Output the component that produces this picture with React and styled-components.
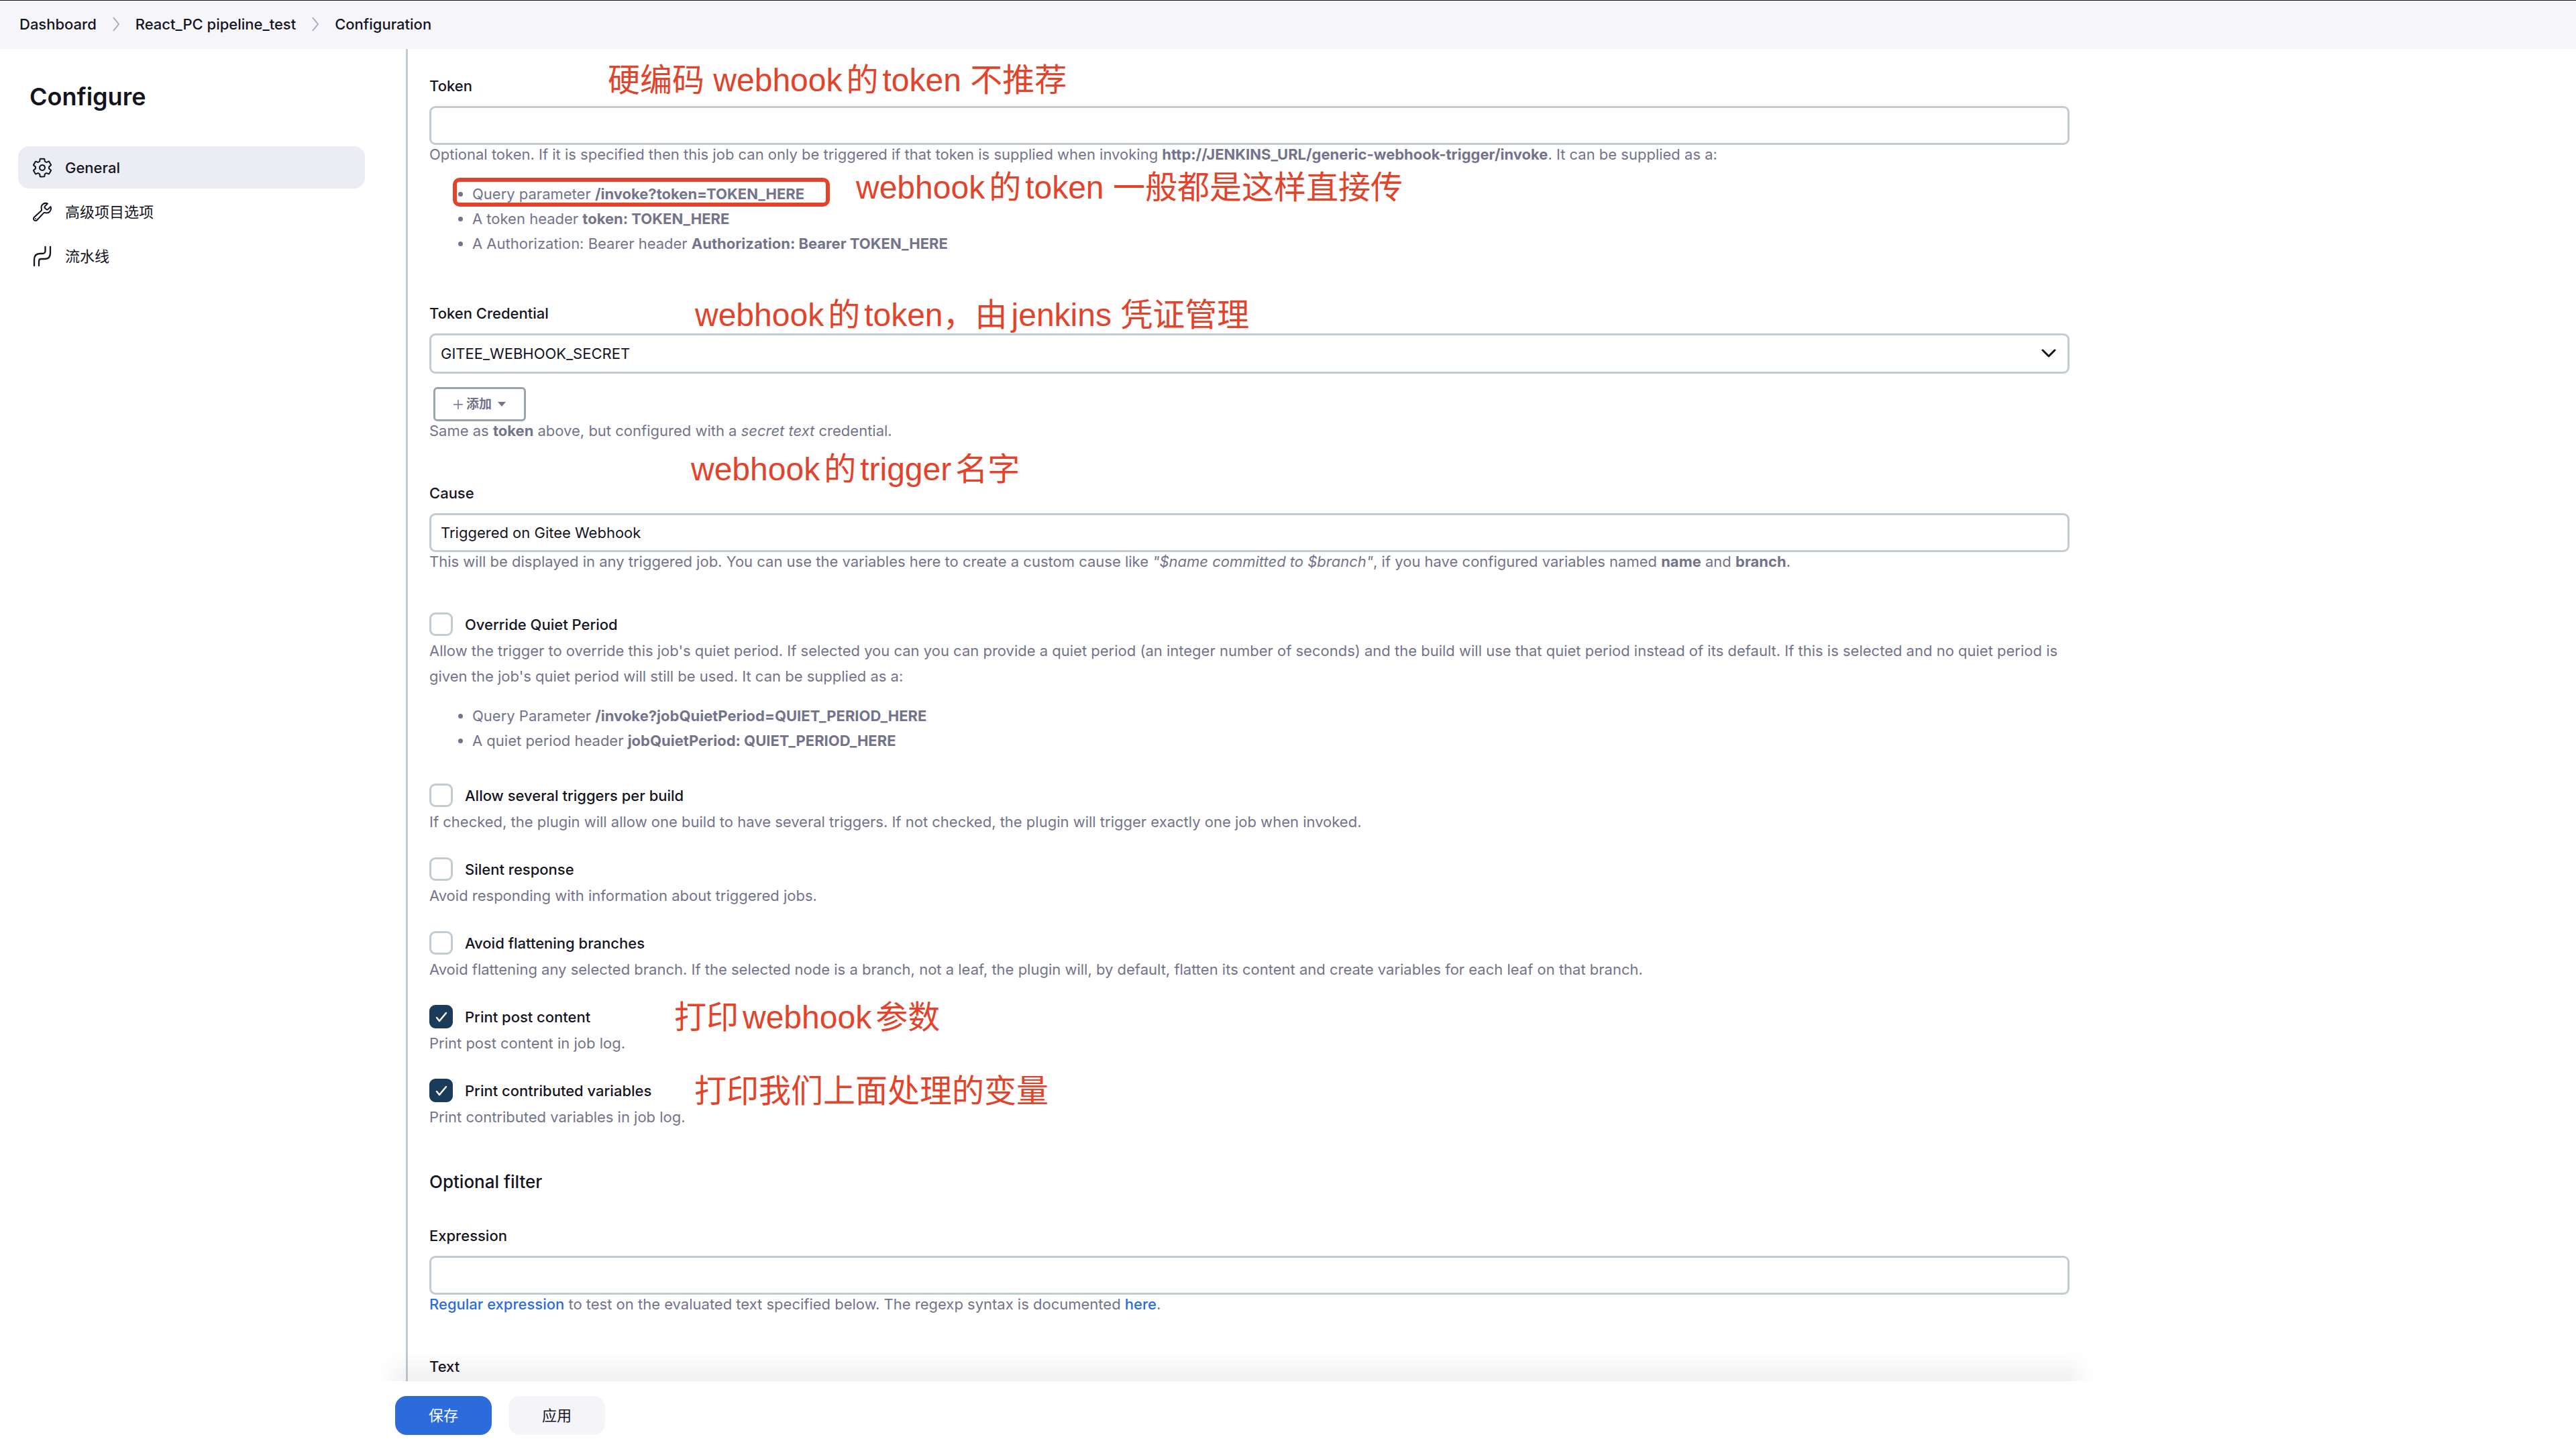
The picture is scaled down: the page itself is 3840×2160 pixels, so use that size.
import React from "react";
import styled, { createGlobalStyle } from "styled-components";
import { IoSettingsOutline, IoBuildOutline } from "react-icons/io5";

const ink = "#14141f";
const muted = "#73738c";
const line = "#c3ccd1";
const blue = "#2c6bdc";
const red = "#e2432a";

const GlobalStyle = createGlobalStyle`
  *, *::before, *::after { box-sizing: border-box; }
  body {
    margin: 0;
    background: #fff;
    color: ${ink};
    font: 400 22px/28px Inter, "Noto Sans CJK SC", sans-serif;
  }
  input, select, button { font: inherit; color: inherit; }
  a { text-decoration: none; color: inherit; }
  h1, h2, p, ul, ol { margin: 0; padding: 0; }
`;

const Page = styled.div`
  height: 100vh;
  display: flex;
  flex-direction: column;
  overflow: hidden;
`;

const Header = styled.header`
  height: 73px;
  flex: none;
  padding: 0 29px 2px;
  border-top: 1px solid #14141f;
  background: #f6f5fa;
`;

const Crumbs = styled.ol`
  height: 100%;
  display: flex;
  align-items: center;
  gap: 24px;
  list-style: none;
  font-weight: 500;
`;

const Crumb = styled.li`
  display: flex;
  align-items: center;
  gap: 24px;
`;

const Body = styled.div`
  flex: 1;
  min-height: 0;
  display: flex;
`;

const Sidebar = styled.nav`
  width: 556px;
  flex: none;
  padding: 49px 12px 0 27px;
`;

const PageTitle = styled.h1`
  padding-left: 17px;
  margin-bottom: 52px;
  font-size: 36px;
  line-height: 44px;
  font-weight: 600;
`;

const NavList = styled.ul`
  display: flex;
  flex-direction: column;
  gap: 3px;
  list-style: none;
`;

const NavLink = styled.a`
  height: 63px;
  display: flex;
  align-items: center;
  gap: 18px;
  padding: 0 20px;
  border-radius: 16px;
  font-weight: 500;
  background: ${(p) => (p.$active ? "#ececf5" : "transparent")};
  svg { width: 32px; height: 32px; flex: none; }
  &:lang(zh) { font-weight: 400; }
`;

const Main = styled.main`
  flex: 1;
  min-width: 0;
  max-width: 2590px;
  display: flex;
  flex-direction: column;
`;

const Viewport = styled.div`
  flex: 1;
  min-height: 0;
  position: relative;
  overflow: hidden;
  padding: 0 61px 0 49px;
  &::after {
    content: "";
    position: absolute;
    left: 29px;
    right: 45px;
    bottom: -60px;
    height: 86px;
    background: rgba(20, 20, 50, 0.055);
    filter: blur(12px);
    pointer-events: none;
  }
`;

const Form = styled.form`
  min-height: 100%;
  padding: 41px 0 0 32px;
  border-left: 3px solid ${line};
`;

const Field = styled.div`
  position: relative;
  margin-bottom: ${(p) => p.$gap || 60}px;
`;

const Label = styled.label`
  display: block;
  width: max-content;
  margin-bottom: 16px;
  font-weight: 500;
`;

const TextInput = styled.input`
  display: block;
  width: 100%;
  height: 58px;
  padding: 0 14px;
  border: 3px solid ${line};
  border-radius: 9px;
  background: #fff;
`;

const SelectWrap = styled.div`
  display: grid;
  align-items: center;
  margin-bottom: 20px;
  > * { grid-area: 1 / 1; }
  svg { justify-self: end; margin-right: 20px; pointer-events: none; }
`;

const Select = styled.select`
  appearance: none;
  width: 100%;
  height: 60px;
  padding: 0 14px;
  border: 3px solid ${line};
  border-radius: 9px;
  background: #fff;
`;

const AddButton = styled.button`
  display: flex;
  align-items: center;
  justify-content: center;
  gap: 5px;
  width: 138px;
  height: 51px;
  margin-left: 6px;
  border: 3px solid #9ba3ab;
  border-radius: 6px;
  background: #fff;
  color: ${muted};
  font-size: 19px;
  font-weight: 700;
`;

const Help = styled.p`
  margin-top: -5px;
  line-height: 38px;
  color: ${muted};
  b { font-weight: 700; }
  a { color: ${blue}; font-weight: 500; }
`;

const Bullets = styled.ul`
  margin-top: 22px;
  padding: 0 0 11px 64px;
  line-height: 37px;
  color: ${muted};
  b { font-weight: 700; }
`;

const CheckRow = styled.label`
  display: flex;
  align-items: center;
  gap: 18px;
  width: max-content;
  margin-bottom: 8px;
  font-weight: 500;
`;

const Tick = styled.span`
  display: grid;
  place-items: center;
  > * { grid-area: 1 / 1; }
  svg { pointer-events: none; }
`;

const Checkbox = styled.input`
  appearance: none;
  width: 35px;
  height: 35px;
  margin: 0;
  border: 3px solid ${line};
  border-radius: 9px;
  background: #fff;
  &:checked { border-color: #1b3b5a; background: #1b3b5a; }
`;

const SectionTitle = styled.h2`
  padding-top: 28px;
  margin-bottom: 50px;
  font-size: 26px;
  line-height: 32px;
  font-weight: 500;
`;

const Note = styled.span`
  position: absolute;
  top: ${(p) => p.$top}px;
  left: ${(p) => p.$left}px;
  font-family: "Liberation Sans", "Noto Sans CJK SC", sans-serif;
  font-size: 48px;
  line-height: 62px;
  text-autospace: normal;
  white-space: nowrap;
  color: ${red};
`;

const Highlight = styled.span`
  position: absolute;
  top: 151px;
  left: 35px;
  width: 562px;
  height: 43px;
  border: 6px solid ${red};
  border-radius: 10px;
`;

const Footer = styled.footer`
  flex: none;
  height: 101px;
  display: flex;
  align-items: flex-start;
  gap: 25px;
  padding: 22px 33px;
`;

const Action = styled.button`
  width: 144px;
  height: 58px;
  border: 0;
  border-radius: 17px;
  color: ${(p) => (p.$primary ? "#fff" : ink)};
  background: ${(p) => (p.$primary ? blue : "#f5f4f9")};
`;

const CrumbArrow = () => (
  <svg width="10" height="22" viewBox="0 0 10 22" fill="none" stroke="#a9a9b8" strokeWidth="2" aria-hidden="true">
    <path d="M1 1l8 10-8 10" />
  </svg>
);

const PipelineIcon = () => (
  <svg viewBox="0 0 32 32" fill="none" stroke="currentColor" strokeWidth="2.3" strokeLinecap="round" aria-hidden="true">
    <path d="M20.500 2V8Q20.500 12 16 12H13Q4 12 4 21V30" />
    <path d="M28 2V11Q28 20 20 20H14Q11 20 11 24V30" />
  </svg>
);

const Chevron = () => (
  <svg width="22" height="14" viewBox="0 0 22 14" fill="none" stroke={ink} strokeWidth="3" strokeLinecap="round" strokeLinejoin="round" aria-hidden="true">
    <path d="M2 2l9 9 9-9" />
  </svg>
);

function CheckField({ id, label, checked, note, children }) {
  return (
    <Field $gap={34}>
      <CheckRow htmlFor={id}>
        <Tick>
          <Checkbox type="checkbox" id={id} defaultChecked={checked} />
          {checked && (
            <svg width="18" height="16" viewBox="0 0 18 16" fill="none" stroke="#fff" strokeWidth="2.5" strokeLinecap="round" strokeLinejoin="round" aria-hidden="true">
              <path d="M2 9l4 5L16 2" />
            </svg>
          )}
        </Tick>
        {label}
      </CheckRow>
      {note}
      {children}
    </Field>
  );
}

export default function App() {
  return (
    <Page>
      <GlobalStyle />
      <Header>
        <Crumbs>
          <Crumb><a href="#dashboard">Dashboard</a><CrumbArrow /></Crumb>
          <Crumb><a href="#job">React_PC pipeline_test</a><CrumbArrow /></Crumb>
          <Crumb><a href="#configuration">Configuration</a></Crumb>
        </Crumbs>
      </Header>
      <Body>
        <Sidebar>
          <PageTitle>Configure</PageTitle>
          <NavList>
            <li><NavLink href="#general" $active><IoSettingsOutline />General</NavLink></li>
            <li><NavLink href="#advanced" lang="zh"><IoBuildOutline />高级项目选项</NavLink></li>
            <li><NavLink href="#pipeline" lang="zh"><PipelineIcon />流水线</NavLink></li>
          </NavList>
        </Sidebar>
        <Main>
          <Viewport>
            <Form id="config" onSubmit={(e) => e.preventDefault()}>
              <Field>
                <Label htmlFor="token">Token</Label>
                <Note $top={-25} $left={266}>硬编码 webhook的token 不推荐</Note>
                <TextInput id="token" type="text" />
                <Help>
                  Optional token. If it is specified then this job can only be triggered if that token is supplied when invoking <b>http://JENKINS_URL/generic-webhook-trigger/invoke</b>. It can be supplied as a:
                </Help>
                <Bullets>
                  <li>Query parameter <b>/invoke?token=TOKEN_HERE</b></li>
                  <li>A token header <b>token: TOKEN_HERE</b></li>
                  <li>A Authorization: Bearer header <b>Authorization: Bearer TOKEN_HERE</b></li>
                </Bullets>
                <Highlight />
                <Note $top={135} $left={636}>webhook的token 一般都是这样直接传</Note>
              </Field>

              <Field>
                <Label htmlFor="credential">Token Credential</Label>
                <Note $top={-14} $left={396}>webhook的token，由jenkins 凭证管理</Note>
                <SelectWrap>
                  <Select id="credential" defaultValue="gitee">
                    <option value="gitee">GITEE_WEBHOOK_SECRET</option>
                  </Select>
                  <Chevron />
                </SelectWrap>
                <AddButton type="button">
                  <svg width="14" height="14" viewBox="0 0 14 14" stroke={muted} strokeWidth="1.5" aria-hidden="true">
                    <path d="M7 0v14M0 7h14" />
                  </svg>
                  添加
                  <svg width="16" height="7" viewBox="0 0 16 7" fill={muted} aria-hidden="true">
                    <path d="M4 0h12l-6 7z" />
                  </svg>
                </AddButton>
                <Help>
                  Same as <b>token</b> above, but configured with a <i>secret text</i> credential.
                </Help>
              </Field>

              <Field $gap={57}>
                <Label htmlFor="cause">Cause</Label>
                <Note $top={-52} $left={390}>webhook的trigger名字</Note>
                <TextInput id="cause" type="text" defaultValue="Triggered on Gitee Webhook" />
                <Help>
                  This will be displayed in any triggered job. You can use the variables here to create a custom cause like <i>"$name committed to $branch"</i>, if you have configured variables named <b>name</b> and <b>branch</b>.
                </Help>
              </Field>

              <CheckField id="quiet" label="Override Quiet Period">
                <Help>
                  Allow the trigger to override this job's quiet period. If selected you can you can provide a quiet period (an integer number of seconds) and the build will use that quiet period instead of its default. If this is selected and no quiet period is given the job's quiet period will still be used. It can be supplied as a:
                </Help>
                <Bullets>
                  <li>Query Parameter <b>/invoke?jobQuietPeriod=QUIET_PERIOD_HERE</b></li>
                  <li>A quiet period header <b>jobQuietPeriod: QUIET_PERIOD_HERE</b></li>
                </Bullets>
              </CheckField>

              <CheckField id="several" label="Allow several triggers per build">
                <Help>If checked, the plugin will allow one build to have several triggers. If not checked, the plugin will trigger exactly one job when invoked.</Help>
              </CheckField>
              <CheckField id="silent" label="Silent response">
                <Help>Avoid responding with information about triggered jobs.</Help>
              </CheckField>
              <CheckField id="flatten" label="Avoid flattening branches">
                <Help>Avoid flattening any selected branch. If the selected node is a branch, not a leaf, the plugin will, by default, flatten its content and create variables for each leaf on that branch.</Help>
              </CheckField>
              <CheckField id="post" label="Print post content" checked note={<Note $top={-12} $left={365}>打印webhook参数</Note>}>
                <Help>Print post content in job log.</Help>
              </CheckField>
              <CheckField id="variables" label="Print contributed variables" checked note={<Note $top={-12} $left={395}>打印我们上面处理的变量</Note>}>
                <Help>Print contributed variables in job log.</Help>
              </CheckField>

              <Field>
                <SectionTitle>Optional filter</SectionTitle>
                <Label htmlFor="expression">Expression</Label>
                <TextInput id="expression" type="text" />
                <Help>
                  <a href="#regex">Regular expression</a> to test on the evaluated text specified below. The regexp syntax is documented <a href="#syntax">here</a>.
                </Help>
              </Field>

              <Field>
                <Label htmlFor="text">Text</Label>
                <TextInput id="text" type="text" />
              </Field>
            </Form>
          </Viewport>
          <Footer>
            <Action type="submit" form="config" $primary>保存</Action>
            <Action type="button">应用</Action>
          </Footer>
        </Main>
      </Body>
    </Page>
  );
}
